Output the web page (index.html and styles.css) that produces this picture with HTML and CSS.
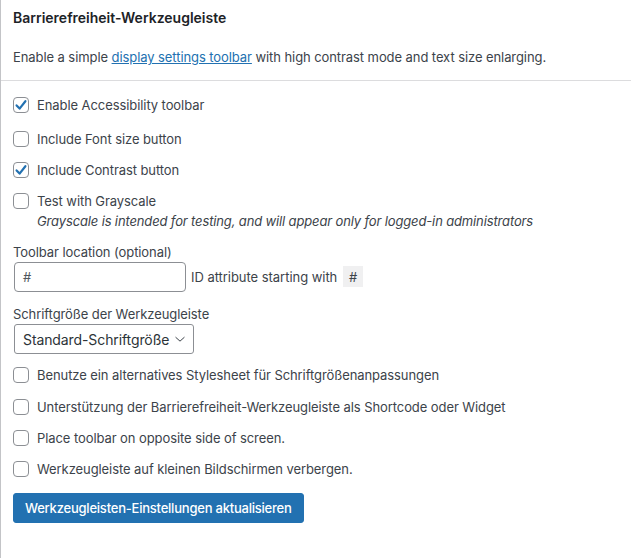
FILE: index.html
```html
<!DOCTYPE html>
<html lang="de">
<head>
<meta charset="utf-8">
<title>Barrierefreiheit-Werkzeugleiste</title>
<link rel="stylesheet" href="styles.css">
</head>
<body>
<div class="panel">
  <div class="panel-head">
    <h2 class="title">Barrierefreiheit-Werkzeugleiste</h2>
    <p class="desc">Enable a simple <a href="#" class="link">display settings toolbar</a> with high contrast mode and text size enlarging.</p>
  </div>
  <form class="panel-body">
    <label class="check first">
      <span class="box checked"><svg viewBox="0 0 16 16" width="16" height="16"><path d="M3.6 8.4 L6.6 11.6 L12.4 4.2" fill="none" stroke="#2271b1" stroke-width="2.2" stroke-linecap="round" stroke-linejoin="round"/></svg></span>
      <span class="text">Enable Accessibility toolbar</span>
    </label>
    <label class="check gap14">
      <span class="box"></span>
      <span class="text">Include Font size button</span>
    </label>
    <label class="check">
      <span class="box checked"><svg viewBox="0 0 16 16" width="16" height="16"><path d="M3.6 8.4 L6.6 11.6 L12.4 4.2" fill="none" stroke="#2271b1" stroke-width="2.2" stroke-linecap="round" stroke-linejoin="round"/></svg></span>
      <span class="text">Include Contrast button</span>
    </label>
    <label class="check">
      <span class="box"></span>
      <span class="text">Test with Grayscale</span>
    </label>
    <p class="note">Grayscale is intended for testing, and will appear only for logged-in administrators</p>

    <div class="field loc">
      <div class="field-label">Toolbar location (optional)</div>
      <div class="field-row">
        <span class="input">#</span>
        <span class="hint">ID attribute starting with <code class="code">#</code></span>
      </div>
    </div>

    <div class="field size">
      <div class="field-label">Schriftgröße der Werkzeugleiste</div>
      <div class="select">
        <span>Standard-Schriftgröße</span>
        <svg class="chev" viewBox="0 0 12 8" width="10" height="7"><path d="M1 1.5 L6 6 L11 1.5" fill="none" stroke="#3c434a" stroke-width="1.2" stroke-linecap="round" stroke-linejoin="round"/></svg>
      </div>
    </div>

    <label class="check after-select">
      <span class="box"></span>
      <span class="text">Benutze ein alternatives Stylesheet für Schriftgrößenanpassungen</span>
    </label>
    <label class="check gap12">
      <span class="box"></span>
      <span class="text">Unterstützung der Barrierefreiheit-Werkzeugleiste als Shortcode oder Widget</span>
    </label>
    <label class="check">
      <span class="box"></span>
      <span class="text">Place toolbar on opposite side of screen.</span>
    </label>
    <label class="check">
      <span class="box"></span>
      <span class="text">Werkzeugleiste auf kleinen Bildschirmen verbergen.</span>
    </label>

    <div class="actions">
      <button type="button" class="button">Werkzeugleisten-Einstellungen aktualisieren</button>
    </div>
  </form>
</div>
</body>
</html>
```

FILE: styles.css
```css
html, body {
  margin: 0;
  padding: 0;
  background: #fff;
}

body {
  font-family: Inter, "Liberation Sans", sans-serif;
  font-size: 13px;
  letter-spacing: -0.08px;
  color: #3c434a;
}

.panel {
  border-left: 1px solid #c3c4c7;
  min-height: 558px;
  box-sizing: border-box;
}

.panel-head {
  padding: 8px 12px 13px;
  border-bottom: 1px solid #dcdcde;
}

.title {
  margin: 0;
  font-size: 14px;
  line-height: 20px;
  font-weight: 600;
  letter-spacing: 0;
  color: #1d2327;
}

.desc {
  margin: 19px 0 0;
  line-height: 20px;
}

.link {
  color: #2271b1;
  text-decoration: underline;
}

.panel-body {
  padding: 14px 12px 0;
  display: flex;
  flex-direction: column;
  align-items: flex-start;
}

.check {
  display: flex;
  align-items: center;
  height: 20px;
  margin-top: 11px;
}

.check.first {
  margin-top: 0;
}

.check.gap14 {
  margin-top: 14px;
}

.check.gap12 {
  margin-top: 12px;
}

.check.after-select {
  margin-top: 11px;
}

.box {
  width: 16px;
  height: 16px;
  box-sizing: border-box;
  border: 1px solid #8c8f94;
  border-radius: 4px;
  margin-right: 8px;
  display: flex;
  align-items: center;
  justify-content: center;
  flex: none;
}

.box svg {
  display: block;
  margin: -1px;
}

.text {
  line-height: 20px;
}

.note {
  margin: 0;
  padding-left: 24px;
  font-style: italic;
  letter-spacing: -0.14px;
  line-height: 20px;
}

.field {
  display: flex;
  flex-direction: column;
}

.field.loc {
  margin-top: 11px;
}

.field.size {
  margin-top: 12px;
}

.field-label {
  line-height: 20px;
}

.field-row {
  display: flex;
  align-items: center;
}

.input {
  width: 172px;
  height: 30px;
  box-sizing: border-box;
  border: 1px solid #8c8f94;
  border-radius: 4px;
  padding: 0 8px;
  line-height: 28px;
  margin-left: 1px;
  color: #50575e;
  font-size: 13px;
}

.hint {
  margin-left: 5px;
  letter-spacing: -0.04px;
}

.code {
  font-family: Inter, "Liberation Sans", sans-serif;
  font-size: 13px;
  background: #f0f0f1;
  padding: 3px 6px 2px;
  margin-left: 2px;
}

.select {
  display: flex;
  align-items: center;
  width: 180px;
  height: 30px;
  box-sizing: border-box;
  border: 1px solid #8c8f94;
  border-radius: 3px;
  padding: 0 8px 0 8px;
  margin-left: 1px;
  font-size: 14px;
  letter-spacing: -0.1px;
  color: #2c3338;
  justify-content: space-between;
}

.chev {
  display: block;
  flex: none;
}

.actions {
  margin-top: 14px;
}

.button {
  font-family: Inter, "Liberation Sans", sans-serif;
  font-size: 13px;
  font-weight: 500;
  letter-spacing: -0.22px;
  color: #fff;
  background: #2271b1;
  border: 1px solid #2271b1;
  border-radius: 3px;
  height: 30px;
  padding: 0 11px;
  cursor: pointer;
}
```
